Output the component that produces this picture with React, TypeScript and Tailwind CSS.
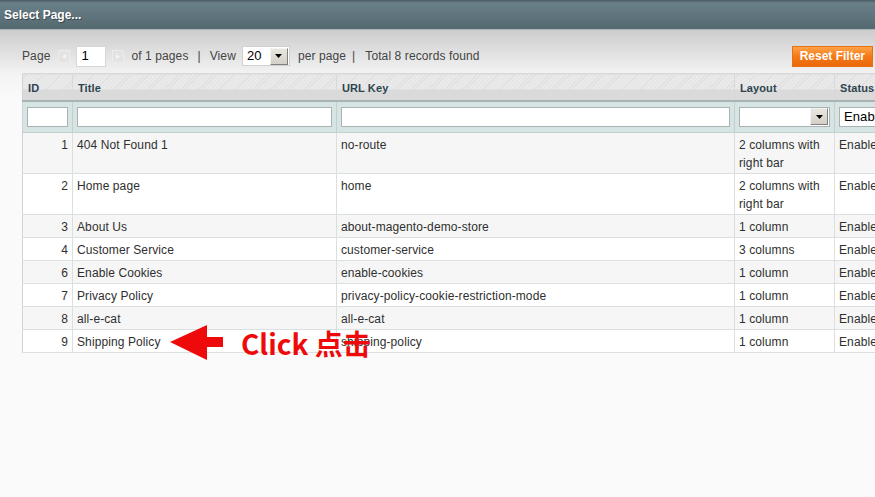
import React from "react";

const rows = [
  { id: 1, title: "404 Not Found 1", url: "no-route", layout: "2 columns with right bar" },
  { id: 2, title: "Home page", url: "home", layout: "2 columns with right bar" },
  { id: 3, title: "About Us", url: "about-magento-demo-store", layout: "1 column" },
  { id: 4, title: "Customer Service", url: "customer-service", layout: "3 columns" },
  { id: 6, title: "Enable Cookies", url: "enable-cookies", layout: "1 column" },
  { id: 7, title: "Privacy Policy", url: "privacy-policy-cookie-restriction-mode", layout: "1 column" },
  { id: 8, title: "all-e-cat", url: "all-e-cat", layout: "1 column" },
  { id: 9, title: "Shipping Policy", url: "shipping-policy", layout: "1 column" },
];

function DropBtn({ className = "" }: { className?: string }) {
  return (
    <span
      className={
        "flex items-center justify-center w-[18px] h-[17px] border border-t-[#f4f4f4] border-l-[#f4f4f4] border-r-[#808080] border-b-[#808080] bg-[linear-gradient(#e8e6e0,#d4d0c8)] " +
        className
      }
    >
      <svg width="7" height="4" viewBox="0 0 7 4">
        <polygon points="0,0 7,0 3.5,4" fill="#000" />
      </svg>
    </span>
  );
}

function ArrowBtn({ dir }: { dir: "l" | "r" }) {
  return (
    <span className="flex items-center justify-center w-[12px] h-[13px] bg-[#e3e3e3] border border-[#ececec]">
      <svg width="4" height="5" viewBox="0 0 4 5">
        {dir === "l" ? (
          <polygon points="4,0 4,5 0,2.5" fill="#f4f4f4" />
        ) : (
          <polygon points="0,0 0,5 4,2.5" fill="#f4f4f4" />
        )}
      </svg>
    </span>
  );
}

const hdr =
  "text-left align-top font-bold text-[11px] text-[#2d444f] px-[5px] pt-[6px] h-[27px] border-r border-[#d5dada] bg-[linear-gradient(to_bottom,transparent_0px,transparent_15px,#dadada_15px,#dadada_27px),repeating-linear-gradient(135deg,#ebebeb_0px,#ebebeb_2px,#dedede_2px,#dedede_3px)]";

const filt = "h-[32px] px-[4px] border-r border-[#c4d0d0] bg-[#d7e4e4] align-middle";

export default function App() {
  return (
    <div
      className="relative w-[875px] h-[497px] overflow-hidden bg-[#fafafa] text-[12px] text-[#2f2f2f] tracking-[0.1px]"
      style={{ fontFamily: '"Liberation Sans", Arial, sans-serif' }}
    >
      {/* Title bar */}
      <div className="h-[30px] bg-[linear-gradient(#4a5a61_0px,#6a8089_3px,#566a72_27px)] border-b border-[#a9b4b8] flex items-center pl-[4px]">
        <span className="text-white font-bold text-[12px] tracking-normal [text-shadow:1px_1px_0_#3a474c]">Select Page...</span>
      </div>

      <div className="bg-[linear-gradient(#cdcdcd_0px,#f4f4f4_45px,#fafafa_70px)] pt-[15px] pl-[22px]">
        {/* Pager */}
        <div className="flex items-center h-[22px] text-[#444] whitespace-nowrap">
          <span className="mr-[8px]">Page</span>
          <ArrowBtn dir="l" />
          <span className="ml-[6px] mr-[6px] w-[30px] h-[21px] bg-white border border-[#d6d6d6] flex items-center pl-[4px] text-[13px] text-black">
            1
          </span>
          <ArrowBtn dir="r" />
          <span className="ml-[7px]">of 1 pages</span>
          <span className="mx-[9px]">|</span>
          <span className="mr-[6px]">View</span>
          <span className="w-[48px] h-[20px] bg-white border border-[#d0d0d0] flex items-center justify-between pl-[4px] pr-[1px] text-[13px] text-black">
            20
            <DropBtn />
          </span>
          <span className="ml-[8px]">per page</span>
          <span className="mx-[6px]">|</span>
          <span className="ml-[4px]">Total 8 records found</span>
          <span className="ml-auto mr-[2px] h-[21px] px-[7px] flex items-center bg-[linear-gradient(#ffa24a,#f47a16_50%,#ea670a)] border border-[#e7700f] text-white font-bold text-[12px] tracking-normal">
            Reset Filter
          </span>
        </div>

        {/* Grid */}
        <table className="mt-[6px] border-collapse table-fixed w-[910px] border-l border-[#d0d4d4]">
          <colgroup>
            <col className="w-[50px]" />
            <col className="w-[264px]" />
            <col className="w-[398px]" />
            <col className="w-[100px]" />
            <col className="w-[98px]" />
          </colgroup>
          <thead>
            <tr className="border-t border-[#d8d8d8]">
              <th className={hdr}>ID</th>
              <th className={hdr}>Title</th>
              <th className={hdr}>URL Key</th>
              <th className={hdr}>Layout</th>
              <th className={hdr}>Status</th>
            </tr>
            <tr className="border-t-2 border-b border-t-[#a8b4b4] border-b-[#c4d0d0]">
              <th className={filt}>
                <div className="h-[20px] bg-white border border-[#aab3b3]" />
              </th>
              <th className={filt}>
                <div className="h-[20px] bg-white border border-[#aab3b3]" />
              </th>
              <th className={filt}>
                <div className="h-[20px] bg-white border border-[#aab3b3]" />
              </th>
              <th className={filt}>
                <div className="h-[20px] bg-white border border-[#aab3b3] flex items-center justify-end pr-[1px]">
                  <DropBtn />
                </div>
              </th>
              <th className={filt}>
                <div className="h-[20px] bg-white border border-[#aab3b3] flex items-center pl-[4px] text-[13px] font-normal text-black text-left">
                  Enabled
                </div>
              </th>
            </tr>
          </thead>
          <tbody>
            {rows.map((r, i) => (
              <tr
                key={r.id}
                className={
                  "border-b border-[#dadfdf] align-top leading-[18px] " +
                  (i % 2 === 0 ? "bg-[#f6f6f6]" : "bg-white")
                }
              >
                <td className="px-[4px] pt-[3px] pb-[1px] text-right border-r border-[#dadfdf]">{r.id}</td>
                <td className="px-[4px] pt-[3px] pb-[1px] border-r border-[#dadfdf]">{r.title}</td>
                <td className="px-[4px] pt-[3px] pb-[1px] border-r border-[#dadfdf]">{r.url}</td>
                <td className="px-[4px] pt-[3px] pb-[1px] border-r border-[#dadfdf]">
                  {r.layout === "2 columns with right bar" ? (
                    <>
                      2 columns with
                      <br />
                      right bar
                    </>
                  ) : (
                    r.layout
                  )}
                </td>
                <td className="px-[4px] pt-[3px] pb-[1px] border-r border-[#dadfdf] whitespace-nowrap overflow-hidden">
                  Enabled
                </td>
              </tr>
            ))}
          </tbody>
        </table>
      </div>

      {/* Annotation overlay */}
      <div className="absolute left-[170px] top-[325px] flex items-center pointer-events-none">
        <svg width="54" height="35" viewBox="0 0 54 35">
          <polygon points="0,17 37,0 37,12 53,12 53,22 37,22 37,35" fill="#ee0a0a" />
        </svg>
        <span
          className="ml-[17px] text-[28px] font-bold text-[#ee0a0a] leading-none tracking-normal"
          style={{ fontFamily: '"Noto Sans CJK SC", "Noto Sans", sans-serif' }}
        >
          Click 点击
        </span>
      </div>
    </div>
  );
}
